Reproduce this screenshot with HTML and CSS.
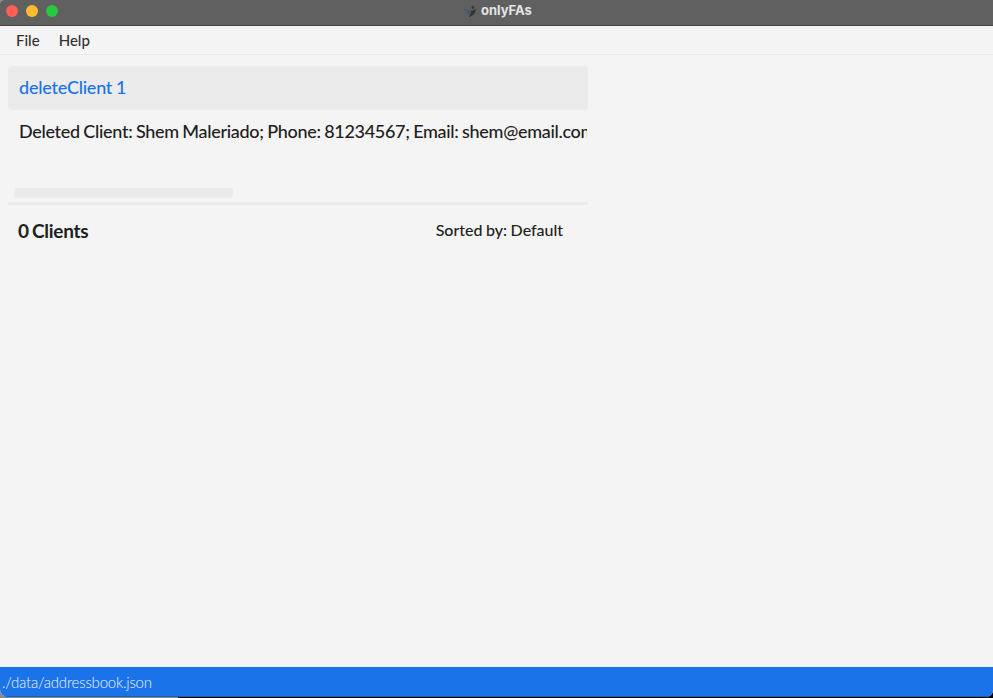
FILE: index.html
```html
<!DOCTYPE html>
<html lang="en">
<head>
<meta charset="utf-8">
<title>onlyFAs</title>
<link rel="stylesheet" href="styles.css">
</head>
<body>
<div class="window">
  <header class="titlebar">
    <div class="lights"><i class="light red"></i><i class="light yellow"></i><i class="light green"></i></div>
    <div class="title">
      <svg class="logo" viewBox="0 0 14 14" width="14" height="14"><path d="M.5 4.500 6.500 6 8 8 7 11 4.500 10.500 5 9 2.500 8.500 3.500 7.500z" fill="#46566f"/><path d="M12.700 4.500C13 9 10 12.500 5.500 13c2-2 2.500-3.500 2.500-6.500C10 7 11.500 6 12.700 4.500z" fill="#303338"/><circle cx="10" cy="3.500" r="1.400" fill="#34373b"/></svg>
      <span class="name">onlyFAs</span>
    </div>
  </header>
  <nav class="menu"><span class="file">File</span><span class="help">Help</span></nav>
  <main class="content">
    <div class="command"><span class="command-text">deleteClient 1</span></div>
    <div class="result">
      <div class="result-line"><span class="result-text">Deleted Client: Shem Maleriado; Phone: 81234567; Email: shem@email.com</span></div>
      <div class="thumb"></div>
    </div>
    <div class="summary"><span class="count">0 Clients</span><span class="sorted">Sorted by: Default</span></div>
  </main>
  <footer class="status"><span class="path">./data/addressbook.json</span></footer>
</div>
</body>
</html>
```
FILE: styles.css
```css
* { box-sizing: border-box; }
html { background: linear-gradient(90deg, #8b8b8b 0 178px, #050505 178px); }
body { margin: 0; font-family: Lato, sans-serif; color: #1d2020; }
.window { width: 993px; height: 697px; display: flex; flex-direction: column; background: #f4f4f4; border-radius: 4px 0 7px 8px; overflow: hidden; white-space: nowrap; }
.titlebar { height: 26px; flex: none; display: flex; background: #606060; border-bottom: 1px solid #444; }
.lights { display: flex; gap: 8px; padding: 5px 0 0 6px; width: 463px; }
.light { width: 12px; height: 12px; border-radius: 50%; }
.red { background: #ff5f57; }
.yellow { background: #febc2e; }
.green { background: #28c840; }
.title { display: flex; gap: 4px; height: 21px; align-items: center; color: #e4e4e4; font: 700 13px/21px Inter, sans-serif; }
.menu { height: 29px; flex: none; display: flex; gap: 19px; padding-left: 16px; border-bottom: 1px solid #eaeaea; font-size: 15px; line-height: 29px; font-weight: 500; color: #303030; }
.content { flex: 1; width: 588px; padding: 11px 0 0 8px; }
.command { height: 44px; padding-left: 11px; border-radius: 4px; background: #ebebeb; color: #1a73e8; font-size: 18px; line-height: 43px; font-weight: 500; letter-spacing: -0.24px; word-spacing: -0.5px; }
.result { height: 95px; border-bottom: 3px solid #ebebeb; }
.result-line { height: 78px; margin-right: 1px; padding-left: 11px; overflow: hidden; font-size: 18px; line-height: 43px; font-weight: 500; letter-spacing: -0.31px; word-spacing: -0.7px; }
.thumb { width: 219px; height: 10px; margin-left: 6px; border-radius: 3px; background: #ebebeb; }
.summary { display: flex; justify-content: space-between; padding: 0 25px 0 10px; line-height: 50px; }
.count { padding-top: 1px; font-size: 19px; font-weight: 700; letter-spacing: -0.28px; word-spacing: -1px; }
.sorted { font-size: 16px; font-weight: 500; letter-spacing: -0.03px; word-spacing: -0.4px; }
.status { height: 30px; flex: none; padding-left: 2px; background: #1a73e8; border-bottom: 1px solid #195bb0; color: #edf4ff; font-size: 15px; line-height: 30px; font-weight: 300; letter-spacing: -0.2px; }
```
